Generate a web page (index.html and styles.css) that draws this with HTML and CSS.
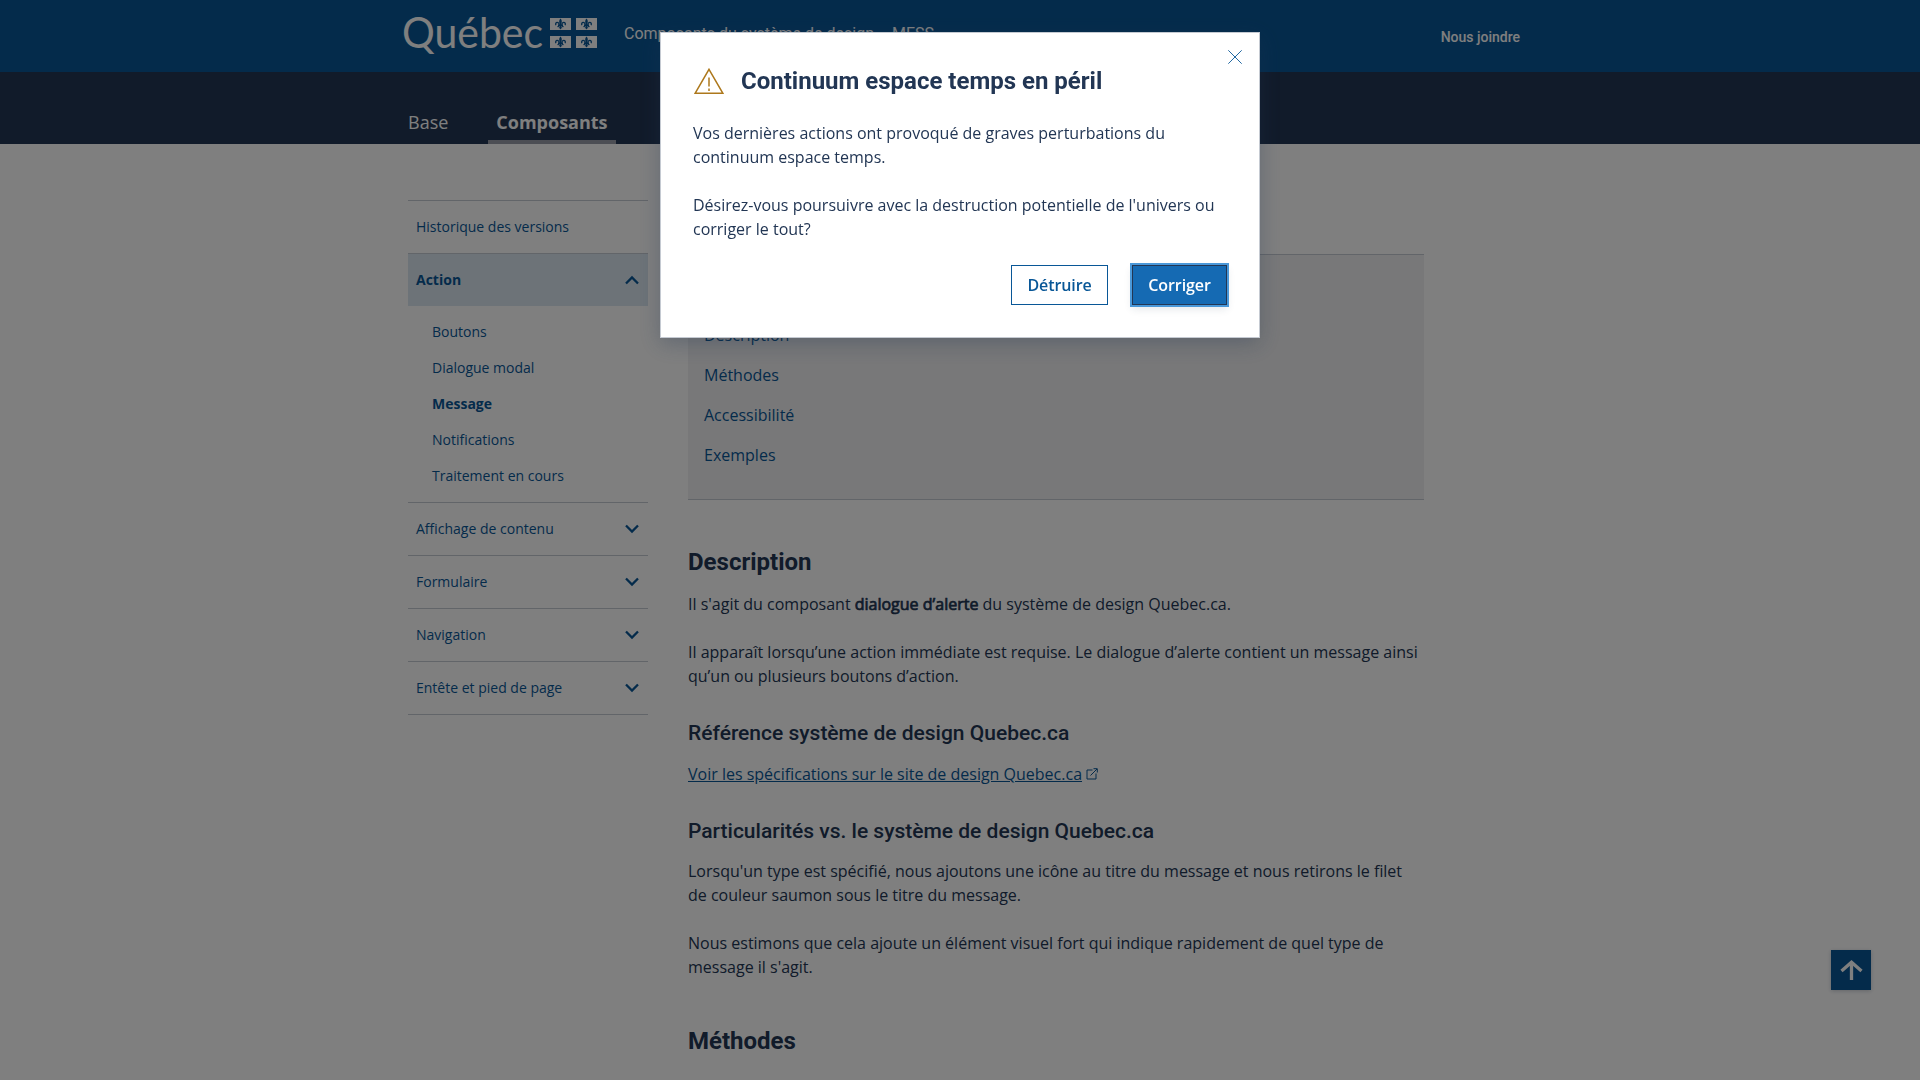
FILE: index.html
```html
<!DOCTYPE html>
<html lang="fr">
<head>
<meta charset="utf-8">
<title>Message - Composants du système de design</title>
<link rel="stylesheet" href="styles.css">
</head>
<body>
<svg class="defs" width="0" height="0" aria-hidden="true">
  <symbol id="chevron" viewBox="0 0 14 10"><path d="M1 1.500 7 7.500l6-6" fill="none" stroke="currentColor" stroke-width="2.300"/></symbol>
  <symbol id="lys" viewBox="0 0 21 12">
    <rect width="21" height="12" fill="#fff"/>
    <path d="M10.500.400C9 2 8.800 3.600 9.900 6.500h1.200C12.200 3.600 12 2 10.500.400zM8 6.600h5v1.300H8zM9.600 7.900h1.800c0 1.400.5 2 1 2.300h-1.100l-.8 1.300-.8-1.300H8.600c.5-.3 1-.9 1-2.300z" fill="#095797"/>
    <path d="M9.200 7C9.200 5.300 8.300 4.400 7.200 4.400 5.900 4.400 5.200 5.900 6 7.200M11.800 7c0-1.700.9-2.600 2-2.600 1.300 0 2 1.500 1.200 2.800M9.300 7.600 7.600 9M11.700 7.600 13.400 9" fill="none" stroke="#095797" stroke-width="1.300"/>
  </symbol>
</svg>

<header class="header">
  <div class="container header-row">
    <svg class="logo" width="198" height="56" role="img" aria-label="Québec">
      <text x="2" y="40" textLength="141" lengthAdjust="spacingAndGlyphs">Québec</text>
      <use href="#lys" x="150" y="10" width="21" height="12"/>
      <use href="#lys" x="176" y="10" width="21" height="12"/>
      <use href="#lys" x="150" y="28" width="21" height="12"/>
      <use href="#lys" x="176" y="28" width="21" height="12"/>
    </svg>
    <span class="site-name">Composants du système de design<span class="dash">-</span>MESS</span>
    <a class="contact">Nous joindre</a>
  </div>
</header>

<nav class="topnav">
  <div class="container topnav-row">
    <a class="tab">Base</a>
    <a class="tab active">Composants</a>
  </div>
</nav>

<div class="layout">
  <aside class="sidebar">
    <a class="section">Historique des versions</a>
    <a class="section open">Action <svg class="chev up"><use href="#chevron"/></svg></a>
    <div class="sub">
      <a>Boutons</a>
      <a>Dialogue modal</a>
      <a class="current">Message</a>
      <a>Notifications</a>
      <a>Traitement en cours</a>
    </div>
    <a class="section">Affichage de contenu <svg class="chev"><use href="#chevron"/></svg></a>
    <a class="section">Formulaire <svg class="chev"><use href="#chevron"/></svg></a>
    <a class="section">Navigation <svg class="chev"><use href="#chevron"/></svg></a>
    <a class="section">Entête et pied de page <svg class="chev"><use href="#chevron"/></svg></a>
  </aside>

  <main class="main">
    <div class="toc">
      <a>Description</a>
      <a>Méthodes</a>
      <a>Accessibilité</a>
      <a>Exemples</a>
    </div>
    <h2>Description</h2>
    <p>Il s'agit du composant <strong>dialogue d’alerte</strong> du système de design Quebec.ca.</p>
    <p>Il apparaît lorsqu’une action immédiate est requise. Le dialogue d’alerte contient un message ainsi qu’un ou plusieurs boutons d’action.</p>
    <h3>Référence système de design Quebec.ca</h3>
    <p><a class="link">Voir les spécifications sur le site de design Quebec.ca</a><svg class="ext" viewBox="0 0 12 12"><path d="M6.500 2H1v9h9V5.500M7.500.700h3.800v3.800M11 1 4.500 7.500" fill="none" stroke="currentColor"/></svg></p>
    <h3 class="second">Particularités vs. le système de design Quebec.ca</h3>
    <p>Lorsqu'un type est spécifié, nous ajoutons une icône au titre du message et nous retirons le filet de couleur saumon sous le titre du message.</p>
    <p>Nous estimons que cela ajoute un élément visuel fort qui indique rapidement de quel type de message il s'agit.</p>
    <h2 class="last">Méthodes</h2>
  </main>
</div>

<a class="to-top" aria-label="Haut de page"><svg width="24" height="22" viewBox="0 0 24 22"><path d="M12.500 21V4M2.500 12 12.500 3.300l10 8.700" fill="none" stroke="#fff" stroke-width="3.300"/></svg></a>

<div class="backdrop">
  <div class="modal" role="alertdialog">
    <svg class="close" width="14" height="14" viewBox="0 0 14 14"><path d="M.3.300l13.400 13.400M13.700.300.300 13.700" stroke="#095797" stroke-width=".9"/></svg>
    <div class="modal-title">
      <svg width="30" height="27" viewBox="0 0 30 27"><path d="M15 1.300 28.900 25.300H1.100z" fill="none" stroke="#ad781c" stroke-width="1.500"/><path d="M15 9.500v9M15 20.500v2.500" stroke="#ad781c" stroke-width="1.500"/></svg>
      <span>Continuum espace temps en péril</span>
    </div>
    <p>Vos dernières actions ont provoqué de graves perturbations du continuum espace temps.</p>
    <p>Désirez-vous poursuivre avec la destruction potentielle de l'univers ou corriger le tout?</p>
    <div class="actions">
      <button class="btn secondary">Détruire</button>
      <button class="btn primary">Corriger</button>
    </div>
  </div>
</div>
</body>
</html>
```
FILE: styles.css
```css
* { box-sizing: border-box; }
body {
  margin: 0;
  height: 1080px;
  overflow: hidden;
  background: #fff;
  color: #223654;
  font: 400 16px/24px "Open Sans", sans-serif;
}
p, h2, h3 { margin: 0; }
.defs { display: block; }
.container { width: 1120px; margin: 0 auto; display: flex; }

.header { height: 72px; background: #095797; color: #fff; }
.header-row { height: 72px; padding-top: 8px; }
.logo { flex: none; }
.logo text { font: 400 42px Lato, sans-serif; fill: #fff; }
.site-name { margin: 14px 0 0 26px; font: 400 16px/24px Roboto, sans-serif; white-space: pre; }
.dash { display: inline-block; width: 18px; text-align: center; }
.contact { margin: 17px 0 0 auto; font: 500 14px/24px Roboto, sans-serif; }

.topnav { height: 72px; background: #223654; color: #fff; }
.topnav-row { height: 72px; align-items: flex-end; gap: 32px; }
.tab { height: 40px; padding: 4px 8px 0; line-height: 28px; font-size: 18px; border-bottom: 4px solid transparent; }
.tab.active { font-weight: 700; border-color: #989ca8; }

.layout { width: 1120px; margin: 0 auto; padding: 56px 8px 0; display: flex; gap: 40px; align-items: flex-start; }
.sidebar { width: 240px; flex: none; border-bottom: 1px solid #c5cad2; font-size: 14px; color: #095797; }
.section { display: flex; align-items: center; justify-content: space-between; height: 53px; padding: 0 9px 0 8px; border-top: 1px solid #c5cad2; }
.section.open { background: #dae6f0; font-weight: 700; }
.chev { width: 14px; height: 10px; }
.chev.up { transform: rotate(180deg); }
.sub { padding: 8px 0 8px 24px; display: flex; flex-direction: column; }
.sub a { height: 36px; line-height: 36px; }
.sub .current { font-weight: 700; }

.main { width: 736px; padding-top: 54px; }
.toc { height: 246px; padding: 60px 16px 0; background: #f1f1f2; border: solid #c5cad2; border-width: 1px 0; display: flex; flex-direction: column; color: #095797; }
.toc a { height: 40px; line-height: 40px; }
h2 { margin: 46px 0 14px; font: 700 24px/32px Roboto, sans-serif; }
h3 { margin: 33px 0 17px; font: 500 21px/24px Roboto, sans-serif; }
h3.second { margin-bottom: 16px; }
.main p + p { margin-top: 24px; }
strong { font-weight: 400; -webkit-text-stroke: .7px currentColor; }
.link { color: #095797; text-decoration: underline; }
.ext { width: 12px; height: 12px; margin-left: 4px; color: #095797; }

.to-top { position: fixed; left: 1831px; top: 950px; width: 40px; height: 40px; display: flex; align-items: center; justify-content: center; background: #095797; box-shadow: 0 1px 4px rgba(34, 54, 84, .24); }

.backdrop { position: fixed; inset: 0; padding-top: 32px; background: rgba(0, 0, 0, .5); }
.modal { position: relative; width: 600px; height: 306px; margin: 0 auto; padding: 32px; background: #fff; border: 1px solid #c5cad2; box-shadow: 0 6px 20px rgba(34, 54, 84, .3); }
.close { position: absolute; right: 17px; top: 17px; }
.modal-title { display: flex; gap: 17px; align-items: center; height: 32px; margin: 0 0 24px 1px; font: 700 24px/32px Roboto, sans-serif; }
.modal p { width: 540px; }
.modal p + p { margin-top: 24px; }
.actions { display: flex; justify-content: flex-end; gap: 24px; padding-top: 24px; }
.btn { height: 40px; padding: 0; font: 600 16px/24px "Open Sans", sans-serif; letter-spacing: -.1px; }
.secondary { width: 97px; background: #fff; color: #095797; border: 1px solid #095797; }
.primary { width: 95px; background: #156ab3; color: #fff; border: 1px solid #223654; box-shadow: 0 0 0 2px #4a98d9, 0 4px 8px rgba(34, 54, 84, .12); }
```
